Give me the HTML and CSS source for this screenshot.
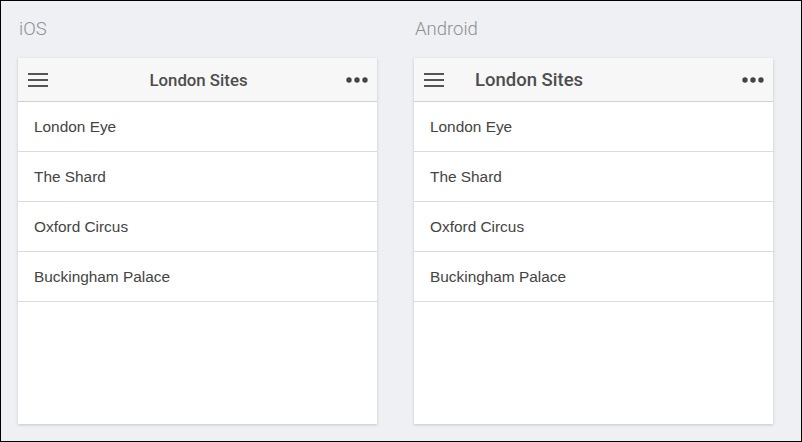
FILE: index.html
```html
<!DOCTYPE html>
<html>
<head>
<meta charset="utf-8">
<link rel="stylesheet" href="styles.css">
</head>
<body>
<div class="frame">
  <section class="col">
    <div class="label">iOS</div>
    <div class="card">
      <div class="bar ios">
        <svg class="menu" width="20" height="14" viewBox="0 0 20 14"><rect x="0" y="0" width="20" height="2" fill="#555"/><rect x="0" y="6" width="20" height="2" fill="#555"/><rect x="0" y="12" width="20" height="2" fill="#555"/></svg>
        <div class="title">London Sites</div>
        <svg class="more" width="22" height="6" viewBox="0 0 22 6"><circle cx="3" cy="3" r="2.7" fill="#444"/><circle cx="11" cy="3" r="2.7" fill="#444"/><circle cx="19" cy="3" r="2.7" fill="#444"/></svg>
      </div>
      <ul class="list">
        <li>London Eye</li>
        <li>The Shard</li>
        <li>Oxford Circus</li>
        <li>Buckingham Palace</li>
      </ul>
    </div>
  </section>
  <section class="col">
    <div class="label">Android</div>
    <div class="card">
      <div class="bar android">
        <svg class="menu" width="20" height="14" viewBox="0 0 20 14"><rect x="0" y="0" width="20" height="2" fill="#555"/><rect x="0" y="6" width="20" height="2" fill="#555"/><rect x="0" y="12" width="20" height="2" fill="#555"/></svg>
        <div class="title">London Sites</div>
        <svg class="more" width="22" height="6" viewBox="0 0 22 6"><circle cx="3" cy="3" r="2.7" fill="#444"/><circle cx="11" cy="3" r="2.7" fill="#444"/><circle cx="19" cy="3" r="2.7" fill="#444"/></svg>
      </div>
      <ul class="list">
        <li>London Eye</li>
        <li>The Shard</li>
        <li>Oxford Circus</li>
        <li>Buckingham Palace</li>
      </ul>
    </div>
  </section>
</div>
</body>
</html>
```
FILE: styles.css
```css
html, body {
  margin: 0;
  padding: 0;
}
body {
  width: 802px;
  height: 442px;
  font-family: "Liberation Sans", Arial, sans-serif;
}
.frame {
  box-sizing: border-box;
  width: 802px;
  height: 442px;
  border: 1px solid #000;
  background: #eff0f4;
  display: flex;
  gap: 37px;
  padding: 0 0 0 17px;
}
.col {
  width: 359px;
  display: flex;
  flex-direction: column;
}
.label {
  height: 57px;
  padding: 17px 0 0 1px;
  box-sizing: border-box;
  font-family: Roboto, "Liberation Sans", sans-serif;
  font-weight: 300;
  font-size: 18.5px;
  line-height: 22px;
  color: #8e8e93;
}
.card {
  height: 366px;
  background: #fff;
  box-shadow: 0 1px 3px rgba(0,0,0,0.18);
  display: flex;
  flex-direction: column;
}
.bar {
  height: 43px;
  background: #f7f7f7;
  border-bottom: 1px solid #cfcfcf;
  display: flex;
  align-items: center;
  padding: 0 9px 0 10px;
  flex-shrink: 0;
}
.bar .menu {
  flex-shrink: 0;
}
.bar .title {
  flex: 1;
  color: #4d4d4d;
  font-family: Roboto, "Liberation Sans", sans-serif;
  font-weight: 500;
}
.bar.ios .title {
  text-align: center;
  font-size: 16.8px;
  padding-left: 3px;
}
.bar.android .title {
  font-size: 18.5px;
  padding-left: 31px;
}
.bar .more {
  flex-shrink: 0;
}
.list {
  list-style: none;
  margin: 0;
  padding: 0;
}
.list li {
  box-sizing: border-box;
  height: 50px;
  border-bottom: 1px solid #dcdcdc;
  display: flex;
  align-items: center;
  padding-left: 16px;
  font-size: 15.4px;
  color: #444;
}
```
